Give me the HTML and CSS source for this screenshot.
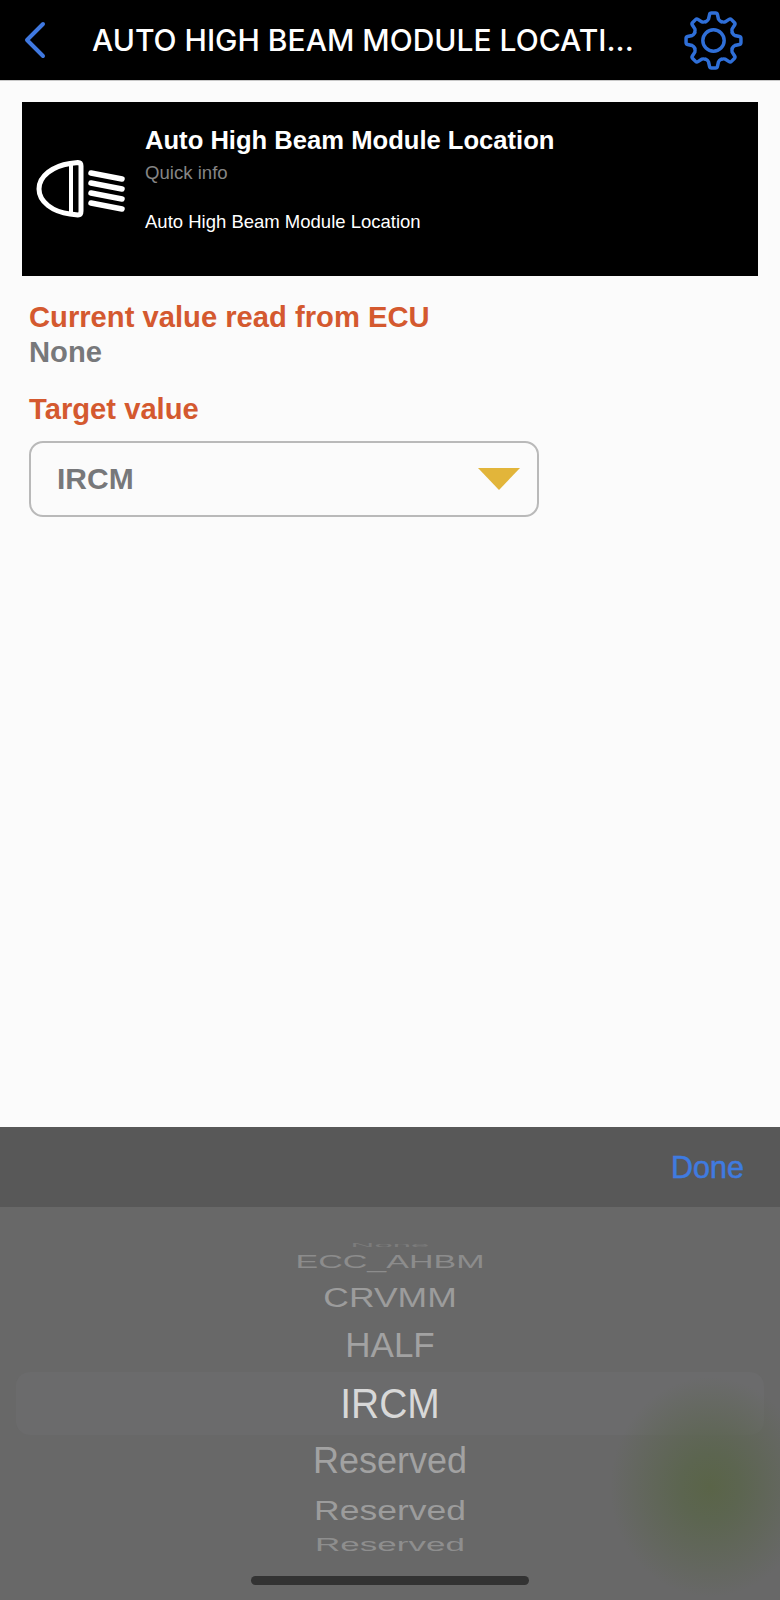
FILE: index.html
```html
<!DOCTYPE html>
<html lang="en">
<head>
    <meta charset="UTF-8">
    <title>Auto High Beam Module Location</title>
    <link rel="stylesheet" href="styles.css">
</head>
<body>
<div class="page">
    <div class="topbar">
        <svg class="back" viewBox="0 0 24 38" width="24" height="38">
            <polyline points="20,3 4,19 20,35" fill="none" stroke="#3f78e0" stroke-width="4" stroke-linecap="round" stroke-linejoin="round"/>
        </svg>
        <div class="topbar-title">AUTO HIGH BEAM MODULE LOCATI...</div>
        <svg class="gear" viewBox="-30 -30 60 60" width="61" height="61">
            <defs>
                <path id="tooth" d="M-7.65 -18.48Q-5.5 -19.6 -4.9 -21L-3.9 -25.5Q-3.6 -27 -2 -27L2 -27Q3.6 -27 3.9 -25.5L4.9 -21Q5.5 -19.6 7.65 -18.48"/>
            </defs>
            <g fill="none" stroke="#2f6fd8" stroke-width="3.4" stroke-linecap="round">
                <use href="#tooth"/>
                <use href="#tooth" transform="rotate(45)"/>
                <use href="#tooth" transform="rotate(90)"/>
                <use href="#tooth" transform="rotate(135)"/>
                <use href="#tooth" transform="rotate(180)"/>
                <use href="#tooth" transform="rotate(225)"/>
                <use href="#tooth" transform="rotate(270)"/>
                <use href="#tooth" transform="rotate(315)"/>
                <circle r="10.5"/>
            </g>
        </svg>
    </div>

    <div class="content">
        <div class="card">
            <svg class="lamp" viewBox="36 160 90 60" width="90" height="60">
                <g fill="none" stroke="#fff" stroke-linecap="round" stroke-linejoin="round">
                    <path stroke-width="5" d="M70 164.5L78 163.5Q81 163.5 81 167V212Q81 216 78 216L70 215C53 213 39 203 39 190C39 177 53 167 70 164.5Z"/>
                    <path stroke-width="4" d="M71 165V214"/>
                    <path stroke-width="5.5" d="M91 174L122 180M91 184L122 190M91 194L122 200M91 204L122 210"/>
                </g>
            </svg>
            <div class="card-text">
                <div class="card-title">Auto High Beam Module Location</div>
                <div class="card-sub">Quick info</div>
                <div class="card-desc">Auto High Beam Module Location</div>
            </div>
        </div>

        <div class="label">Current value read from ECU</div>
        <div class="value">None</div>
        <div class="label label-target">Target value</div>
        <div class="select">
            <span>IRCM</span>
            <i class="caret"></i>
        </div>
    </div>

    <div class="sheet">
        <div class="toolbar"><span class="done">Done</span></div>
        <div class="picker">
            <div class="wheel">
                <div class="item item-none"><span>None</span></div>
                <div class="item item-ecc"><span>ECC_AHBM</span></div>
                <div class="item item-crv"><span>CRVMM</span></div>
                <div class="item item-half"><span>HALF</span></div>
                <div class="item item-current"><span>IRCM</span></div>
                <div class="item item-res1"><span>Reserved</span></div>
                <div class="item item-res2"><span>Reserved</span></div>
                <div class="item item-res3"><span>Reserved</span></div>
            </div>
            <div class="blob"></div>
            <div class="homebar"></div>
        </div>
    </div>
</div>
</body>
</html>
```

FILE: styles.css
```css
body {
    margin: 0;
    font-family: "Liberation Sans", Arial, sans-serif;
}

.page {
    width: 780px;
    height: 1600px;
    display: flex;
    flex-direction: column;
    background: #fbfbfb;
    overflow: hidden;
}

.topbar {
    height: 80px;
    flex: none;
    display: flex;
    align-items: center;
    background: #000;
    border-bottom: 1px solid #c8c8c8;
    color: #fff;
    padding-left: 23px;
}

.back {
    flex: none;
}

.topbar-title {
    margin-left: 45px;
    width: 570px;
    font-family: "Inter", "Liberation Sans", sans-serif;
    font-weight: 500;
    font-size: 30px;
    white-space: nowrap;
}

.gear {
    flex: none;
    margin-left: 21px;
}

.content {
    flex: 1;
    padding: 21px 22px 0;
}

.card {
    height: 174px;
    display: flex;
    align-items: center;
    background: #000;
    color: #fff;
    padding-left: 14px;
}

.lamp {
    flex: none;
}

.card-text {
    margin-left: 19px;
    align-self: flex-start;
    padding-top: 24px;
}

.card-title {
    font-size: 25.6px;
    font-weight: bold;
    line-height: 28px;
}

.card-sub {
    margin-top: 8px;
    font-size: 18.6px;
    line-height: 22px;
    color: #858585;
}

.card-desc {
    margin-top: 27px;
    font-size: 18.5px;
    line-height: 22px;
}

.label {
    margin: 24px 0 0 7px;
    font-size: 29.2px;
    font-weight: bold;
    line-height: 34px;
    color: #d4592f;
}

.label-target {
    margin-top: 23px;
}

.value {
    margin: 1px 0 0 7px;
    font-size: 29.2px;
    font-weight: bold;
    line-height: 34px;
    color: #77787a;
}

.select {
    margin: 15px 0 0 7px;
    width: 463px;
    height: 72px;
    display: flex;
    align-items: center;
    justify-content: space-between;
    border: 2px solid #b9b9b9;
    border-radius: 14px;
    padding: 0 17px 0 26px;
    font-size: 30px;
    font-weight: bold;
    color: #77787a;
}

.caret {
    width: 0;
    height: 0;
    border-left: 21px solid transparent;
    border-right: 21px solid transparent;
    border-top: 22px solid #e2b53a;
}

.sheet {
    height: 473px;
    flex: none;
    display: flex;
    flex-direction: column;
}

.toolbar {
    height: 80px;
    flex: none;
    display: flex;
    align-items: center;
    justify-content: flex-end;
    background: #585858;
    padding-right: 36px;
}

.done {
    font-size: 30.5px;
    color: #3f7be0;
    -webkit-text-stroke: .5px #3f7be0;
}

.picker {
    flex: 1;
    position: relative;
    background: #686868;
    overflow: hidden;
}

.wheel {
    padding-top: 33px;
    text-align: center;
    color: #a2a2a2;
}

.item {
    white-space: nowrap;
}

.item span {
    display: inline-block;
}

.item-none {
    height: 11px;
    line-height: 11px;
    font-size: 33px;
    color: #7c7c7c;
}

.item-none span {
    transform: scaleY(.14);
}

.item-ecc {
    height: 22px;
    line-height: 22px;
    font-size: 34px;
    color: #8c8c8c;
}

.item-ecc span {
    transform: scaleY(.53);
}

.item-crv {
    height: 48px;
    line-height: 48px;
    font-size: 35.5px;
    color: #9c9c9c;
}

.item-crv span {
    transform: scaleY(.8);
}

.item-half {
    height: 48px;
    line-height: 48px;
    font-size: 35px;
}

.item-current {
    height: 63px;
    line-height: 63px;
    margin: 3px 16px 2px;
    border-radius: 14px;
    background: #6b6b6c;
    font-size: 39px;
    color: #d8d8d8;
}

.item-current span {
    transform: scaleY(1.1);
}

.item-res1 {
    height: 48px;
    line-height: 48px;
    font-size: 36px;
}

.item-res2 {
    height: 50px;
    line-height: 50px;
    font-size: 35.5px;
    color: #9c9c9c;
}

.item-res2 span {
    transform: scaleY(.8);
}

.item-res3 {
    height: 20px;
    line-height: 20px;
    font-size: 35px;
    color: #8e8e8e;
}

.item-res3 span {
    transform: scaleY(.5);
}

/* blurred green patch showing through the picker */
.blob {
    position: absolute;
    left: 610px;
    top: 170px;
    width: 200px;
    height: 220px;
    border-radius: 50%;
    background: radial-gradient(closest-side, #5a6448 0%, #5c6550 30%, rgba(104, 104, 104, 0) 100%);
}

.homebar {
    position: absolute;
    left: 251px;
    top: 369px;
    width: 278px;
    height: 9px;
    border-radius: 5px;
    background: #333;
}
```
